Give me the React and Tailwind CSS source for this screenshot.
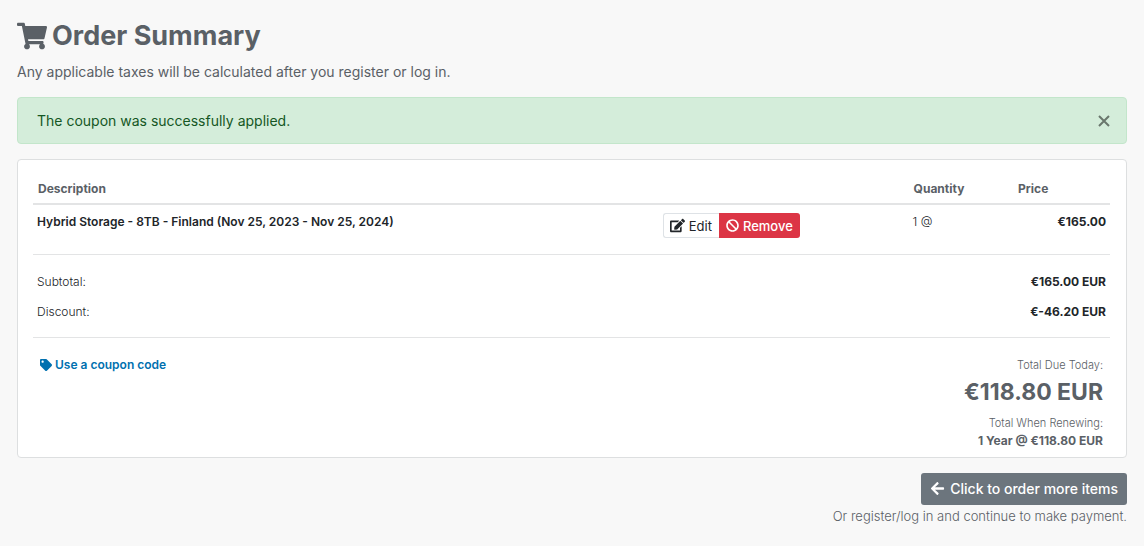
import React, { useState } from "react";
import { FaShoppingCart, FaEdit, FaBan, FaTag, FaArrowLeft } from "react-icons/fa";

const ITEMS = [
  {
    name: "Hybrid Storage - 8TB - Finland (Nov 25, 2023 - Nov 25, 2024)",
    quantity: "1 @",
    price: "€165.00",
  },
];

const TOTALS = [
  { label: "Subtotal:", amount: "€165.00 EUR" },
  { label: "Discount:", amount: "€-46.20 EUR" },
];

function Header() {
  return (
    <header>
      <h1 className="flex items-center gap-[5px] text-[27px] leading-10 font-bold">
        <FaShoppingCart className="h-7 w-[30px]" aria-hidden="true" />
        Order Summary
      </h1>
      <p className="mt-1.5 text-sm">Any applicable taxes will be calculated after you register or log in.</p>
    </header>
  );
}

function CouponAlert({ onClose }) {
  return (
    <div
      role="alert"
      className="mt-[15px] flex items-center justify-between rounded border border-[#c3e6cb] bg-[#d4edda] py-3 pr-4 pl-[19px] text-sm leading-[21px] text-[#155724]"
    >
      <span>The coupon was successfully applied.</span>
      <button type="button" aria-label="Close" onClick={onClose} className="cursor-pointer text-[#6a776d]">
        <svg viewBox="0 0 12 12" className="size-3" fill="none" stroke="currentColor" strokeWidth="2" aria-hidden="true">
          <path d="M1 1 L11 11 M11 1 L1 11" />
        </svg>
      </button>
    </div>
  );
}

function ItemsTable() {
  return (
    <table className="w-full table-fixed text-left">
      <colgroup>
        <col className="w-[58.1%]" />
        <col className="w-[23.2%]" />
        <col className="w-[9.7%]" />
        <col className="w-[9%]" />
      </colgroup>
      <thead>
        <tr className="border-b-2 border-[#e3e4e5]">
          <th scope="col" className="px-[5px] py-[5px] font-bold">Description</th>
          <td />
          <th scope="col" className="px-[5px] py-[5px] font-bold">Quantity</th>
          <th scope="col" className="px-[5px] py-[5px] font-bold">Price</th>
        </tr>
      </thead>
      <tbody className="text-[#212529]">
        {ITEMS.map((item) => (
          <tr key={item.name} className="h-[50px] border-b border-[#e3e4e5] align-top">
            <td className="px-1 pt-2 font-semibold">{item.name}</td>
            <td className="px-1 pt-2">
              <div className="flex h-[25px] text-[13px] leading-5">
                <button
                  type="button"
                  className="flex cursor-pointer items-center gap-1 rounded-l-[3px] border border-r-0 border-[#dee2e6] bg-white pr-[7px] pl-1.5"
                >
                  <FaEdit size={15} aria-hidden="true" />
                  Edit
                </button>
                <button
                  type="button"
                  className="flex cursor-pointer items-center gap-1 rounded-r-[3px] bg-[#dc3545] px-[7px] font-medium text-white"
                >
                  <FaBan size={13} aria-hidden="true" />
                  Remove
                </button>
              </div>
            </td>
            <td className="px-1 pt-2 font-light">{item.quantity}</td>
            <td className="px-1 pt-2 text-right font-bold">{item.price}</td>
          </tr>
        ))}
      </tbody>
    </table>
  );
}

function Totals() {
  return (
    <dl className="flex flex-col gap-3 border-b border-[#e3e4e5] px-1 pt-[18px] pb-4 text-[#212529]">
      {TOTALS.map((t) => (
        <div key={t.label} className="flex justify-between">
          <dt className="font-light">{t.label}</dt>
          <dd className="font-bold">{t.amount}</dd>
        </div>
      ))}
    </dl>
  );
}

function AmountDue() {
  return (
    <div className="flex items-start justify-between px-[7px] pt-[18px] pb-[7px]">
      <a href="#coupon" className="flex items-center gap-[3px] font-semibold text-[#0070af]">
        <FaTag size={12} aria-hidden="true" />
        Use a coupon code
      </a>
      <div className="text-right">
        <p className="text-[11px] leading-[18px] font-light">Total Due Today:</p>
        <p className="text-[23px] leading-9 font-bold">€118.80 EUR</p>
        <p className="mt-1 text-[11px] leading-[18px] font-light">Total When Renewing:</p>
        <p className="font-bold">1 Year @ €118.80 EUR</p>
      </div>
    </div>
  );
}

export default function App() {
  const [showAlert, setShowAlert] = useState(true);

  return (
    <main className="min-h-screen bg-[#f8f8f8] px-[17px] pt-4 pb-5 font-['Inter',sans-serif] text-[#5a6066]">
      <Header />
      {showAlert && <CouponAlert onClose={() => setShowAlert(false)} />}
      <section className="mt-[15px] rounded border border-[#dddfe0] bg-white pr-4 pl-[15px] pt-[15px] text-xs leading-[18px]">
        <ItemsTable />
        <Totals />
        <AmountDue />
      </section>
      <div className="mt-[15px] flex flex-col items-end">
        <button
          type="button"
          className="flex h-8 cursor-pointer items-center gap-[5px] rounded-[3px] bg-[#6c757d] px-[9px] text-sm font-medium text-white"
        >
          <FaArrowLeft size={15} aria-hidden="true" />
          Click to order more items
        </button>
        <p className="mt-px text-[13px] leading-5 font-light">Or register/log in and continue to make payment.</p>
      </div>
    </main>
  );
}
